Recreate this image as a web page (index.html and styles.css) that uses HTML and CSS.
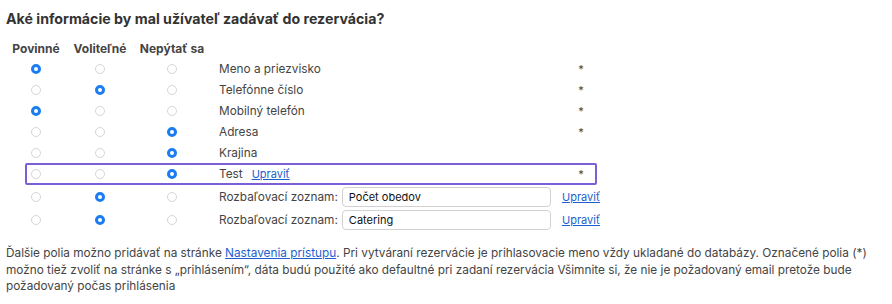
FILE: index.html
```html
<!DOCTYPE html>
<html lang="sk">
<head>
<meta charset="utf-8">
<title>Rezervácia</title>
<link rel="stylesheet" href="styles.css">
</head>
<body>
<div class="page">
  <h2 class="title">Aké informácie by mal užívateľ zadávať do rezervácia?</h2>
  <div class="fields">
    <div class="row head">
      <div class="c">Povinné</div>
      <div class="c">Voliteľné</div>
      <div class="c">Nepýtať sa</div>
      <div></div><div></div>
    </div>
    <div class="row">
      <div class="c"><input type="radio" name="r1" checked></div>
      <div class="c"><input type="radio" name="r1"></div>
      <div class="c"><input type="radio" name="r1"></div>
      <div class="label">Meno a priezvisko</div>
      <div class="c star">*</div>
    </div>
    <div class="row">
      <div class="c"><input type="radio" name="r2"></div>
      <div class="c"><input type="radio" name="r2" checked></div>
      <div class="c"><input type="radio" name="r2"></div>
      <div class="label">Telefónne číslo</div>
      <div class="c star">*</div>
    </div>
    <div class="row">
      <div class="c"><input type="radio" name="r3" checked></div>
      <div class="c"><input type="radio" name="r3"></div>
      <div class="c"><input type="radio" name="r3"></div>
      <div class="label">Mobilný telefón</div>
      <div class="c star">*</div>
    </div>
    <div class="row">
      <div class="c"><input type="radio" name="r4"></div>
      <div class="c"><input type="radio" name="r4"></div>
      <div class="c"><input type="radio" name="r4" checked></div>
      <div class="label">Adresa</div>
      <div class="c star">*</div>
    </div>
    <div class="row">
      <div class="c"><input type="radio" name="r5"></div>
      <div class="c"><input type="radio" name="r5"></div>
      <div class="c"><input type="radio" name="r5" checked></div>
      <div class="label">Krajina</div>
      <div class="c star"></div>
    </div>
    <div class="row tall highlight">
      <div class="c"><input type="radio" name="r6"></div>
      <div class="c"><input type="radio" name="r6"></div>
      <div class="c"><input type="radio" name="r6" checked></div>
      <div class="label">Test <a href="#" class="edit inline">Upraviť</a></div>
      <div class="c star">*</div>
    </div>
    <div class="row taller">
      <div class="c"><input type="radio" name="r7"></div>
      <div class="c"><input type="radio" name="r7" checked></div>
      <div class="c"><input type="radio" name="r7"></div>
      <div class="label">Rozbaľovací zoznam:<input type="text" class="txt" value="Počet obedov"></div>
      <div class="c"><a href="#" class="edit">Upraviť</a></div>
    </div>
    <div class="row taller">
      <div class="c"><input type="radio" name="r8"></div>
      <div class="c"><input type="radio" name="r8" checked></div>
      <div class="c"><input type="radio" name="r8"></div>
      <div class="label">Rozbaľovací zoznam:<input type="text" class="txt" value="Catering"></div>
      <div class="c"><a href="#" class="edit">Upraviť</a></div>
    </div>
  </div>
  <p class="note">Ďalšie polia možno pridávať na stránke <a href="#">Nastavenia prístupu</a>. Pri vytváraní rezervácie je prihlasovacie meno vždy ukladané do databázy. Označené polia (*) možno tiež zvoliť na stránke s „prihlásením“, dáta budú použité ako defaultné pri zadaní rezervácia Všimnite si, že nie je požadovaný email pretože bude požadovaný počas prihlásenia</p>
</div>
</body>
</html>
```

FILE: styles.css
```css
html, body {
  margin: 0;
  padding: 0;
  background: #ffffff;
}
body {
  font-family: Inter, "Noto Sans", "Liberation Sans", sans-serif;
  font-size: 11.8px;
  color: #444444;
}
.page {
  padding: 11px 6px 0 6px;
}
.title {
  margin: 0;
  font-size: 14.2px;
  line-height: 16px;
  font-weight: 700;
  color: #333333;
}
.fields {
  margin-top: 11px;
}
.row {
  display: grid;
  grid-template-columns: 60px 68px 76px 351px 40px;
  width: 595px;
  align-items: center;
  height: 21px;
  position: relative;
}
.row.head {
  height: 20px;
  font-weight: 700;
  font-size: 12px;
  color: #444444;
}
.row.tall {
  height: 22px;
}
.row.taller {
  height: 23px;
}
.c {
  display: flex;
  justify-content: center;
  align-items: center;
}
.label {
  padding-left: 9px;
  display: flex;
  align-items: center;
  white-space: nowrap;
}
.star {
  font-size: 11px;
  color: #444444;
}
.highlight::after {
  content: "";
  position: absolute;
  left: 19px;
  right: 4px;
  top: 0;
  bottom: 0;
  border: 2px solid #7b5fd6;
  border-radius: 2px;
  pointer-events: none;
}
input[type="radio"] {
  -webkit-appearance: none;
  appearance: none;
  margin: 0;
  width: 10px;
  height: 10px;
  border-radius: 50%;
  border: 1px solid #d6d6d6;
  background: #ffffff;
  box-sizing: border-box;
}
input[type="radio"]:checked {
  border: 3px solid #1c7df2;
}
.txt {
  margin-left: 4px;
  width: 209px;
  height: 20px;
  box-sizing: border-box;
  border: 1px solid #d2d2d2;
  border-radius: 4px;
  padding: 0 6px;
  font-family: Inter, "Noto Sans", "Liberation Sans", sans-serif;
  font-size: 11px;
  color: #111111;
  background: #ffffff;
  outline: none;
}
a {
  color: #1d5fd0;
  text-decoration: underline;
}
.edit {
  font-size: 11px;
}
.edit.inline {
  margin-left: 9px;
}
.note {
  margin: 14px 0 0 0;
  line-height: 16.5px;
  font-size: 11.8px;
  color: #444444;
}
```
